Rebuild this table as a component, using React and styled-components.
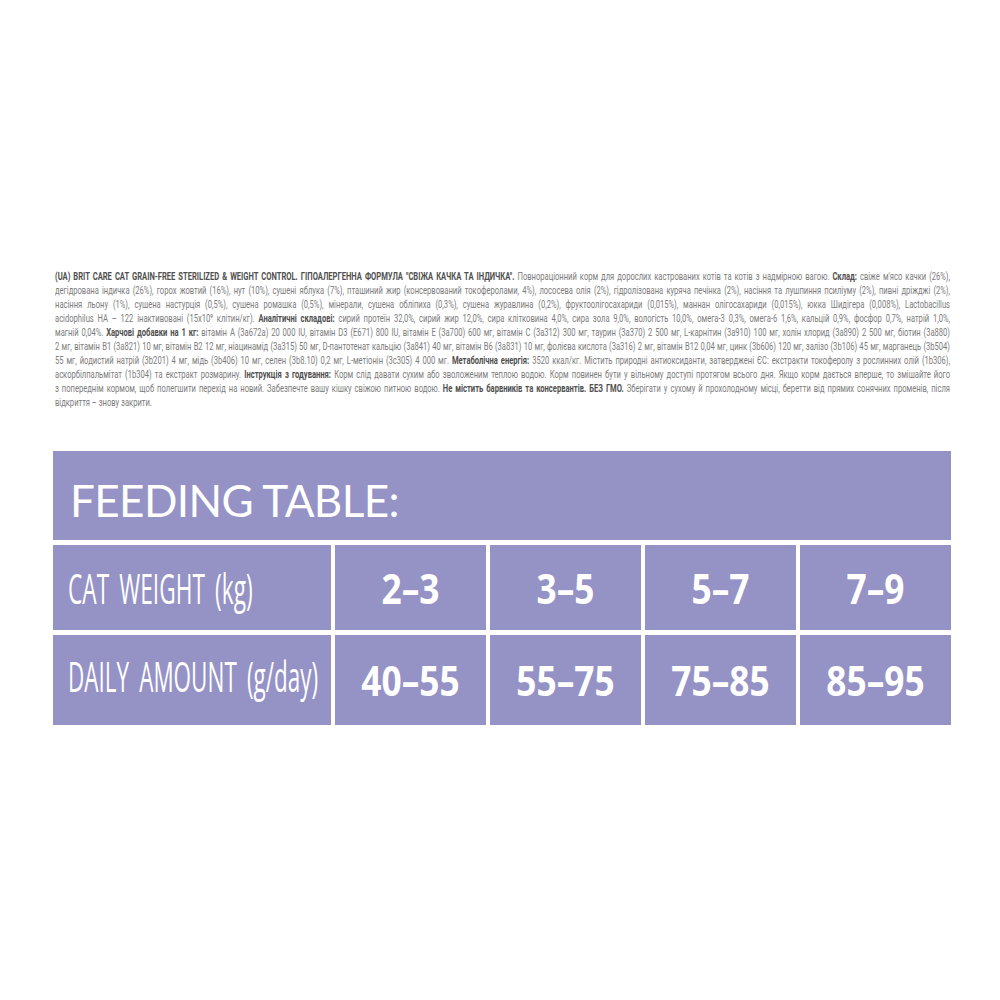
import React from "react";
import styled, { createGlobalStyle } from "styled-components";

const Global = createGlobalStyle`
  html, body { margin: 0; padding: 0; background: #fff; overflow: hidden; }
  #root { width: 1000px; height: 1000px; }
`;

const TEXT_SCALE = 0.69;
const TEXT_W = 895;

const Page = styled.div`
  width: 1000px;
  height: 1000px;
  box-sizing: border-box;
  padding: 270px 49px 0 53px;
  background: #fff;
  overflow: hidden;
  display: flex;
  flex-direction: column;
  gap: 41px;
`;

const Composition = styled.div`
  width: ${TEXT_W}px;
  margin-left: 2px;
  display: flex;
  flex-direction: column;
`;

const Line = styled.div`
  width: ${TEXT_W / TEXT_SCALE}px;
  height: 14px;
  line-height: 14px;
  transform: scaleX(${TEXT_SCALE});
  transform-origin: left center;
  white-space: nowrap;
  text-align: justify;
  text-align-last: ${(p) => (p.$last ? "left" : "justify")};
  font-family: Roboto, "Liberation Sans", sans-serif;
  font-size: 11px;
  color: #7c7c7c;
`;

const B = styled.b`
  font-weight: 700;
  color: #505050;
`;

const Table = styled.div`
  width: 898px;
  display: grid;
  grid-template-columns: 278px repeat(4, 1fr);
  grid-template-rows: 89px 85px 90px;
  gap: 5px 4px;
  background: #fff;
`;

const Cell = styled.div`
  background: #9592c6;
  color: #fff;
  display: flex;
  align-items: center;
  justify-content: ${(p) => (p.$center ? "center" : "flex-start")};
  overflow: hidden;
`;

const HeaderCell = styled(Cell)`
  grid-column: 1 / -1;
  padding: 8px 0 0 17px;
`;

const Title = styled.span`
  font-family: Lato, "Open Sans", sans-serif;
  font-size: 44px;
  font-weight: 400;
  letter-spacing: -0.6px;
  line-height: 1;
`;

const LabelCell = styled(Cell)`
  padding-left: 15px;
  padding-bottom: ${(p) => p.$lift || 0}px;
`;

const Label = styled.span`
  display: inline-block;
  font-family: "Open Sans", sans-serif;
  font-size: 42px;
  font-weight: 400;
  line-height: 1;
  white-space: nowrap;
  word-spacing: 8px;
  transform: scaleX(${(p) => p.$scale});
  transform-origin: left center;
`;

const Num = styled.span`
  display: inline-block;
  font-family: "Open Sans", sans-serif;
  font-size: 42px;
  font-weight: 700;
  line-height: 1;
  white-space: nowrap;
  transform: scaleX(0.84);
  transform-origin: center center;
`;

const lines = [
  [
    <B key="a">(UA) BRIT CARE CAT GRAIN-FREE STERILIZED &amp; WEIGHT CONTROL. ГІПОАЛЕРГЕННА ФОРМУЛА "СВІЖА КАЧКА ТА ІНДИЧКА".</B>,
    " Повнораціонний корм для дорослих кастрованих котів та котів з надмірною вагою. ",
    <B key="b">Склад:</B>,
    " свіже м'ясо качки (26%),",
  ],
  [
    "дегідрована індичка (26%), горох жовтий (16%), нут (10%), сушені яблука (7%), пташиний жир (консервований токоферолами, 4%), лососева олія (2%), гідролізована куряча печінка (2%), насіння та лушпиння псиліуму (2%), пивні дріжджі (2%),",
  ],
  [
    "насіння льону (1%), сушена настурція (0,5%), сушена ромашка (0,5%), мінерали, сушена обліпиха (0,3%), сушена журавлина (0,2%), фруктоолігосахариди (0,015%), маннан олігосахариди (0,015%), юкка Шидігера (0,008%), Lactobacillus",
  ],
  [
    "acidophilus HA – 122 інактивовані (15x10⁹ клітин/кг). ",
    <B key="c">Аналітичні складові:</B>,
    " сирий протеїн 32,0%, сирий жир 12,0%, сира клітковина 4,0%, сира зола 9,0%, вологість 10,0%, омега-3 0,3%, омега-6 1,6%, кальцій 0,9%, фосфор 0,7%, натрій 1,0%,",
  ],
  [
    "магній 0,04%. ",
    <B key="d">Харчові добавки на 1 кг:</B>,
    " вітамін A (3a672a) 20 000 IU, вітамін D3 (E671) 800 IU, вітамін E (3a700) 600 мг, вітамін C (3a312) 300 мг, таурин (3a370) 2 500 мг, L-карнітин (3a910) 100 мг, холін хлорид (3a890) 2 500 мг, біотин (3a880)",
  ],
  [
    "2 мг, вітамін B1 (3a821) 10 мг, вітамін B2 12 мг, ніацинамід (3a315) 50 мг, D-пантотенат кальцію (3a841) 40 мг, вітамін B6 (3a831) 10 мг, фолієва кислота (3a316) 2 мг, вітамін B12 0,04 мг, цинк (3b606) 120 мг, залізо (3b106) 45 мг, марганець (3b504)",
  ],
  [
    "55 мг, йодистий натрій (3b201) 4 мг, мідь (3b406) 10 мг, селен (3b8.10) 0,2 мг, L-метіонін (3c305) 4 000 мг. ",
    <B key="e">Метаболічна енергія:</B>,
    " 3520 ккал/кг. Містить природні антиоксиданти, затверджені ЄС: екстракти токоферолу з рослинних олій (1b306),",
  ],
  [
    "аскорбілпальмітат (1b304) та екстракт розмарину. ",
    <B key="f">Інструкція з годування:</B>,
    " Корм слід давати сухим або зволоженим теплою водою. Корм повинен бути у вільному доступі протягом всього дня. Якщо корм дається вперше, то змішайте його",
  ],
  [
    "з попереднім кормом, щоб полегшити перехід на новий. Забезпечте вашу кішку свіжою питною водою. ",
    <B key="g">Не містить барвників та консервантів. БЕЗ ГМО.</B>,
    " Зберігати у сухому й прохолодному місці, беретти від прямих сонячних променів, після",
  ],
  ["відкриття – знову закрити."],
];

const weights = ["2–3", "3–5", "5–7", "7–9"];
const amounts = ["40–55", "55–75", "75–85", "85–95"];

export default function App() {
  return (
    <>
      <Global />
      <Page>
        <Composition>
          {lines.map((l, i) => (
            <Line key={i} $last={i === lines.length - 1}>
              {l}
            </Line>
          ))}
        </Composition>
        <Table>
          <HeaderCell>
            <Title>FEEDING TABLE:</Title>
          </HeaderCell>
          <LabelCell>
            <Label $scale={0.54}>CAT WEIGHT (kg)</Label>
          </LabelCell>
          {weights.map((w) => (
            <Cell key={w} $center>
              <Num>{w}</Num>
            </Cell>
          ))}
          <LabelCell $lift={8}>
            <Label $scale={0.535}>DAILY AMOUNT (g/day)</Label>
          </LabelCell>
          {amounts.map((a) => (
            <Cell key={a} $center>
              <Num>{a}</Num>
            </Cell>
          ))}
        </Table>
      </Page>
    </>
  );
}
